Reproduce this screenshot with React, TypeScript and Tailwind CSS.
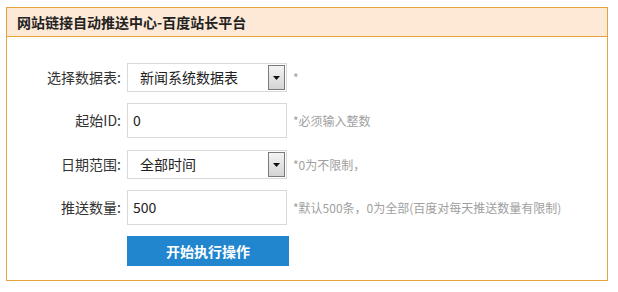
const FONT = { fontFamily: '"Microsoft YaHei", "Noto Sans CJK SC", "Noto Sans", sans-serif' };

function FakeSelect({ value }: { value: string }) {
  return (
    <div className="flex h-[29px] w-[160px] items-center border border-[#d9d9d9] bg-white pl-[12px] pr-px">
      <span className="flex-1 text-[14px] text-[#222]">{value}</span>
      <span className="flex h-[25px] w-[17px] items-center justify-center border border-[#7a7a7a] bg-gradient-to-b from-[#f4f4f4] to-[#d4d4d4]">
        <svg width="7" height="4" viewBox="0 0 7 4">
          <path d="M0 0h7L3.5 4z" fill="#111" />
        </svg>
      </span>
    </div>
  );
}

function TextBox({ value }: { value: string }) {
  return (
    <div className="flex h-[35px] w-[160px] items-center border border-[#d9d9d9] bg-white pl-[5px] text-[14px] text-[#222]">
      {value}
    </div>
  );
}

function Row({ label, hint, children }: { label: string; hint: string; children: React.ReactNode }) {
  return (
    <div className="flex items-center">
      <label className="w-[115px] pr-px text-right text-[14px] text-[#333]">{label}</label>
      <div className="ml-[5px]">{children}</div>
      <span className="ml-[6px] text-[12px] text-[#a0a0a0]">{hint}</span>
    </div>
  );
}

export default function App() {
  return (
    <div className="h-[292px] w-[618px] bg-white pl-[6px] pt-[7px]" style={FONT}>
      <div className="h-[274px] w-[602px] border border-[#e6a23c]">
        <div className="flex h-[29px] items-center border-b border-[#e6a23c] bg-[#fde9d6] pl-[10px] text-[14px] font-bold text-[#222]">
          网站链接自动推送中心-百度站长平台
        </div>
        <div className="flex flex-col pt-[26px]">
          <Row label="选择数据表:" hint="*">
            <FakeSelect value="新闻系统数据表" />
          </Row>
          <div className="mt-[11px]">
            <Row label="起始ID:" hint="*必须输入整数">
              <TextBox value="0" />
            </Row>
          </div>
          <div className="mt-[12px]">
            <Row label="日期范围:" hint="*0为不限制，">
              <FakeSelect value="全部时间" />
            </Row>
          </div>
          <div className="mt-[11px]">
            <Row label="推送数量:" hint="*默认500条，0为全部(百度对每天推送数量有限制)">
              <TextBox value="500" />
            </Row>
          </div>
          <div className="ml-[120px] mt-[11px]">
            <button className="h-[30px] w-[162px] bg-[#2286cf] text-[14px] font-bold text-white">开始执行操作</button>
          </div>
        </div>
      </div>
    </div>
  );
}
